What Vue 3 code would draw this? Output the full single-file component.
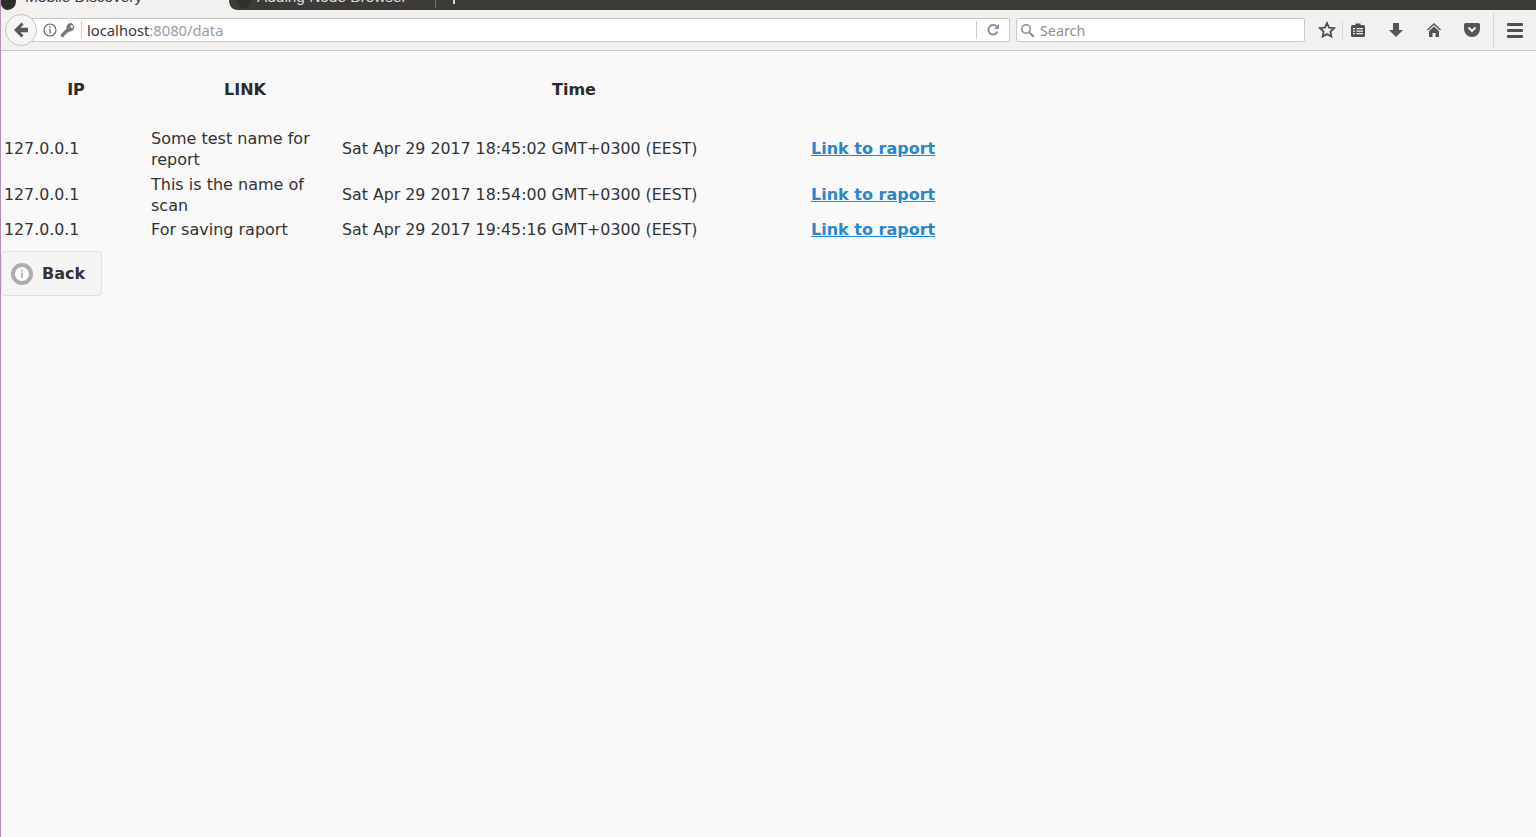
<script setup>
const rows = [
  { ip: '127.0.0.1', name: 'Some test name for report', time: 'Sat Apr 29 2017 18:45:02 GMT+0300 (EEST)', wrapped: true },
  { ip: '127.0.0.1', name: 'This is the name of scan', time: 'Sat Apr 29 2017 18:54:00 GMT+0300 (EEST)', wrapped: true },
  { ip: '127.0.0.1', name: 'For saving raport', time: 'Sat Apr 29 2017 19:45:16 GMT+0300 (EEST)', wrapped: false },
]
</script>

<template>
  <div class="window">
    <div class="tabstrip">
      <div class="tab active">
        <span class="fav"></span>
        <span class="tab-title">Mobile Discovery</span>
      </div>
      <div class="tab dark">
        <span class="fav2"></span>
        <span class="tab-title">Adding Node Browser</span>
      </div>
      <span class="tabsep"></span>
      <span class="plus"></span>
    </div>
    <div class="navbar">
      <button class="back">
        <svg width="18" height="18" viewBox="0 0 18 18"><path d="M9.500 1.500 2 9l7.500 7.500 2-2-3-3.300H16V6.800H8.500l3-3.300z" fill="#595959"/></svg>
      </button>
      <div class="urlbar">
        <svg class="info" width="14" height="14" viewBox="0 0 14 14"><circle cx="7" cy="7" r="6" fill="none" stroke="#6a6a6a" stroke-width="1.200"/><rect x="6.300" y="6" width="1.400" height="4.500" fill="#6a6a6a"/><rect x="6.300" y="3.500" width="1.400" height="1.500" fill="#6a6a6a"/></svg>
        <svg class="key" width="16" height="16" viewBox="0 0 15 15"><path d="M10 1a4 4 0 0 0-3.800 5.200L1 11.500V14h3v-2h2v-2h1.500l1-1.100A4 4 0 1 0 10 1zm1 2a1.300 1.300 0 1 1 0 2.600A1.300 1.300 0 0 1 11 3z" fill="#777"/></svg>
        <span class="urlsep"></span>
        <span class="url"><span class="host">localhost</span>:8080/data</span>
        <span class="urlsep right"></span>
        <svg class="reload" width="14" height="14" viewBox="0 0 14 14"><path d="M11.500 8.500A4.700 4.700 0 1 1 10.500 3.500" fill="none" stroke="#8393a5" stroke-width="2"/><path d="M8 6h5V1z" fill="#8393a5"/></svg>
      </div>
      <div class="search">
        <svg width="15" height="15" viewBox="0 0 15 15"><circle cx="6" cy="6" r="4.200" fill="none" stroke="#8a8a8a" stroke-width="1.500"/><path d="m9.200 9.200 4.500 4.500" stroke="#8a8a8a" stroke-width="2"/></svg>
        <span>Search</span>
      </div>
      <div class="tools">
        <svg class="star" width="18" height="18" viewBox="0 0 18 18"><path d="m9 2 2.100 4.600 5 .6-3.700 3.400 1 5L9 13.100 4.600 15.600l1-5L1.900 7.200l5-.6z" fill="none" stroke="#4f4f4f" stroke-width="1.800"/></svg>
        <span class="toolsep"></span>
        <svg class="clip" width="16" height="16" viewBox="0 0 16 16"><path d="M5.500 1.500h5V3h3A1.500 1.500 0 0 1 15 4.500v9a1.500 1.500 0 0 1-1.500 1.500h-11A1.500 1.500 0 0 1 1 13.500v-9A1.500 1.500 0 0 1 2.500 3h3z" fill="#4f4f4f"/><path d="M3 6h2v1.300H3zM6.500 6H13v1.300H6.500zM3 8.500h2v1.300H3zM6.500 8.500H13v1.300H6.500zM3 11h2v1.300H3zM6.500 11H13v1.300H6.500z" fill="#f2f1f0"/></svg>
        <svg class="down" width="16" height="16" viewBox="0 0 16 16"><path d="M5 1h6v7h4l-7 7-7-7h4z" fill="#555"/></svg>
        <svg class="home" width="16" height="16" viewBox="0 0 16 16"><path d="M8 1 .5 8h2L8 3l5.500 5h2z" fill="#555"/><path d="M8 4.500 3 9v6h3.500v-4h3v4H13V9z" fill="#555"/></svg>
        <svg class="pocket" width="18" height="16" viewBox="0 0 18 16"><path d="M2.500 1h13A1.500 1.500 0 0 1 17 2.500V7a8 8 0 0 1-16 0V2.500A1.500 1.500 0 0 1 2.500 1z" fill="#555"/><path d="m5.500 5.500 3.500 3.500 3.500-3.500" fill="none" stroke="#f2f1f0" stroke-width="2"/></svg>
        <span class="toolsep tall"></span>
        <span class="menu"><i></i><i></i><i></i></span>
      </div>
    </div>
    <main class="page">
      <table class="grid">
        <thead>
          <tr>
            <th class="c-ip">IP</th>
            <th class="c-name">LINK</th>
            <th class="c-time">Time</th>
            <th class="c-link"></th>
          </tr>
        </thead>
        <tbody>
          <tr v-for="r in rows" :key="r.time">
            <td class="ip">{{ r.ip }}</td>
            <td :class="{ wrapped: r.wrapped }">{{ r.name }}</td>
            <td class="time">{{ r.time }}</td>
            <td><a href="#" class="rep">Link to raport</a></td>
          </tr>
        </tbody>
      </table>
      <button class="backbtn">
        <svg width="22" height="22" viewBox="0 0 22 22"><circle cx="11" cy="11" r="9" fill="#fff" stroke="#adadad" stroke-width="4"/><rect x="10" y="9.500" width="2" height="5.500" fill="#bdbdbd"/><rect x="10" y="6.500" width="2" height="2" fill="#bdbdbd"/></svg>
        <span>Back</span>
      </button>
    </main>
  </div>
</template>

<style>
html, body { margin: 0; background: #f9f9f9; }
</style>

<style scoped>
.window {
  height: 837px;
  display: flex;
  flex-direction: column;
  background: #f9f9f9;
  border-left: 1px solid #b08fb8;
  box-sizing: border-box;
  overflow: hidden;
  font-family: "DejaVu Sans", sans-serif;
}
.tabstrip {
  height: 10px;
  background: #3c3b37;
  display: flex;
  overflow: hidden;
  flex: none;
}
.tab {
  height: 10px;
  display: flex;
  flex: none;
  font: 15.4px/16px "Liberation Sans", sans-serif;
  white-space: nowrap;
  position: relative;
  box-sizing: border-box;
}
.tab.active { background: #f2f1f0; color: #3c3b37; padding-left: 24px; width: 227px; }
.tab.dark { background: #3c3b37; color: #dcdcdc; padding-left: 29px; width: 207px; }
.tab.dark::before {
  content: "";
  position: absolute;
  left: 0;
  top: 0;
  width: 10px;
  height: 10px;
  background: #f2f1f0;
  clip-path: path("M0 0H1C1 6 4 10 10 10H0z");
}
.fav { position: absolute; left: 0; top: 0; width: 15px; height: 10px; background: #2e2d2a; border-radius: 0 0 9px 7px; }
.fav2 { position: absolute; left: 9px; top: -6px; width: 14px; height: 14px; background: #302f2c; border-radius: 50%; }
.tab-title { position: relative; top: -11px; height: 16px; }
.tabsep { width: 1px; height: 8px; background: #77766f; flex: none; }
.plus { width: 2px; height: 4px; background: #ddd; margin-left: 17px; flex: none; }
.navbar {
  height: 40px;
  flex: none;
  background: #f2f1f0;
  border-bottom: 1px solid #c8c8c6;
  display: flex;
  align-items: center;
  padding: 0 0 0 4px;
  position: relative;
}
.back {
  width: 32px;
  height: 32px;
  border-radius: 50%;
  border: 1px solid #c4c4c2;
  background: #f5f5f4;
  padding: 0;
  display: flex;
  align-items: center;
  justify-content: center;
  position: relative;
  z-index: 1;
  flex: none;
}
.urlbar {
  width: 990px;
  margin-left: -17px;
  padding-left: 22px;
  height: 24px;
  box-sizing: border-box;
  background: #fff;
  border: 1px solid #c8c8c6;
  border-radius: 0 2px 2px 0;
  display: flex;
  align-items: center;
  flex: none;
}
.info { flex: none; }
.key { flex: none; margin-left: 3px; }
.urlsep { width: 1px; height: 18px; background: #cfcfcf; margin-left: 5px; flex: none; }
.url { font: 14.75px "Noto Sans", sans-serif; color: #9c9c9c; margin-left: 5px; flex: 1; }
.host { color: #3a3a3a; }
.urlsep.right { margin: 0; }
.reload { margin: 0 9px; flex: none; }
.search {
  width: 289px;
  height: 24px;
  margin-left: 6px;
  box-sizing: border-box;
  background: #fff;
  border: 1px solid #c8c8c6;
  border-radius: 2px;
  display: flex;
  align-items: center;
  gap: 5px;
  padding-left: 3px;
  font: 14.3px "Noto Sans", sans-serif;
  color: #8f8f8f;
  flex: none;
}
.tools { display: flex; align-items: center; margin-left: 13px; flex: none; height: 36px; }
.toolsep { width: 1px; height: 18px; background: #d8d7d5; margin-left: 6px; flex: none; }
.toolsep.tall { height: 35px; margin-left: 12px; }
.clip { margin-left: 7px; flex: none; }
.down { margin-left: 22px; flex: none; }
.home { margin-left: 22px; flex: none; }
.pocket { margin-left: 21px; flex: none; }
.menu { display: flex; flex-direction: column; gap: 3px; width: 16px; margin-left: 13px; flex: none; }
.menu i { display: block; height: 3px; background: #4f4f4f; border-radius: 1px; }
.page { flex: 1; padding-top: 20px; color: #333; font-size: 16px; }
.grid { border-collapse: collapse; table-layout: fixed; width: 940px; font-size: 16px; line-height: 21px; }
thead tr { height: 54px; }
.grid th { box-sizing: border-box; padding: 8px 0 0 3px; font-size: 16px; font-weight: 700; color: #2b2b2b; text-align: center; vertical-align: top; }
.grid th.c-time { padding-left: 1px; }
.c-ip { width: 147px; }
.c-name { width: 191px; }
.c-time { width: 469px; }
.grid td { padding: 2px 3px; vertical-align: middle; }
.grid td.wrapped { padding: 3px 3px 1px; }
.grid td.ip, .grid td.time { font-size: 15.8px; }
.rep { color: #2a86d0; font-weight: 700; font-size: 16px; white-space: nowrap; }
.backbtn {
  display: flex;
  align-items: center;
  gap: 9px;
  width: 101px;
  height: 45px;
  margin-top: 9px;
  padding: 0 0 0 9px;
  background: #f5f5f5;
  border: 1px solid #e0e0e0;
  border-radius: 4px;
  box-sizing: border-box;
  font: 700 16px "DejaVu Sans", sans-serif;
  color: #333;
}
</style>
